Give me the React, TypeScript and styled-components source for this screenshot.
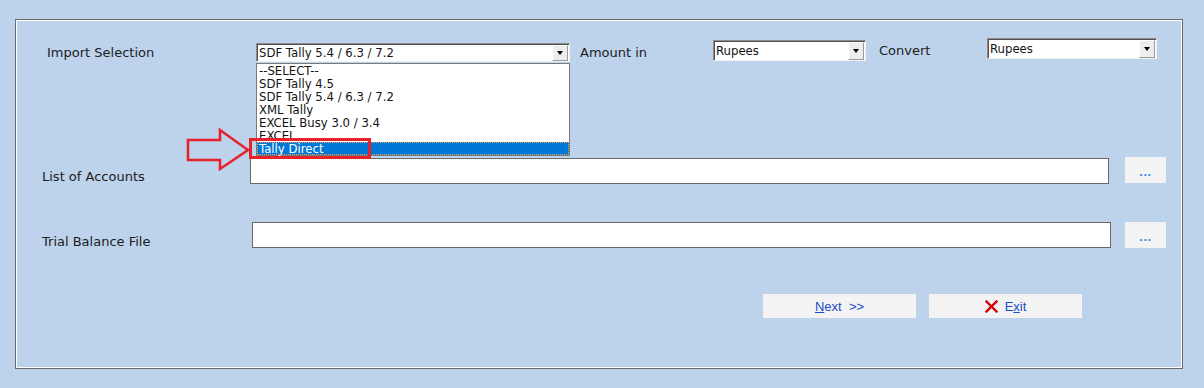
import React from "react";
import styled, { createGlobalStyle, css } from "styled-components";

// --- Estilos globais ---
const GlobalStyle = createGlobalStyle`
  html, body {
    margin: 0;
    padding: 0;
    background: #bdd3ec;
  }
  body {
    font-family: "DejaVu Sans", Verdana, sans-serif;
    color: #1c1c1c;
  }
`;

// --- Layout ---
const Page = styled.div`
  width: 1204px;
  height: 388px;
  box-sizing: border-box;
  padding: 19px 0 0 15px;
`;

const Panel = styled.div`
  position: relative;
  box-sizing: border-box;
  width: 1168px;
  height: 350px;
  border: 1px solid #6b6b6b;
  box-shadow: inset 0 0 0 1px #ffffff;
  padding-top: 18px;
`;

const TopRow = styled.div`
  display: flex;
  align-items: flex-start;
  padding-left: 31px;
`;

const FieldRow = styled.div<{ $mt: number }>`
  display: flex;
  align-items: flex-start;
  height: 26px;
  margin-top: ${(p) => p.$mt}px;
  padding: 0 16px 0 26px;
`;

const ActionRow = styled.div`
  display: flex;
  gap: 13px;
  margin-top: 46px;
  padding-left: 747px;
`;

const Label = styled.div<{ $w: number; $mt: number; $ml?: number }>`
  width: ${(p) => p.$w}px;
  flex: none;
  margin-top: ${(p) => p.$mt}px;
  margin-left: ${(p) => p.$ml ?? 0}px;
  font-size: 13px;
  line-height: 16px;
  white-space: nowrap;
`;

// --- Combo box estilo Windows ---
const SelectBox = styled.div<{ $w: number; $h: number; $mt: number }>`
  position: relative;
  flex: none;
  box-sizing: border-box;
  width: ${(p) => p.$w}px;
  height: ${(p) => p.$h}px;
  margin-top: ${(p) => p.$mt}px;
  background: #ffffff;
  border: 1px solid;
  border-color: #8c8c8c #f2f2f2 #f2f2f2 #8c8c8c;
  box-shadow: inset 1px 1px 0 #505050;
  display: flex;
  align-items: center;
`;

const SelectText = styled.span`
  flex: 1;
  padding: 1px 0 0 2px;
  font-size: 11.7px;
  color: #141414;
  white-space: nowrap;
`;

const ArrowBtn = styled.span`
  flex: none;
  width: 16px;
  align-self: stretch;
  margin: 1px 1px 0 0;
  box-sizing: border-box;
  background: #ededed;
  border: 1px solid;
  border-color: #ffffff #9a9a9a #9a9a9a #ffffff;
  display: flex;
  align-items: center;
  justify-content: center;

  &::after {
    content: "";
    border-left: 3.5px solid transparent;
    border-right: 3.5px solid transparent;
    border-top: 4px solid #000000;
  }
`;

const DropList = styled.ul`
  position: absolute;
  left: -1px;
  top: calc(100% + 2px);
  width: 314px;
  box-sizing: border-box;
  margin: 0;
  padding: 0;
  list-style: none;
  background: #ffffff;
  border: 1px solid #7a7a7a;
  z-index: 2;
`;

const DropItem = styled.li<{ $active?: boolean }>`
  height: 11px;
  line-height: 11px;
  padding: 2px 0 0 2px;
  font-size: 11.7px;
  color: #141414;
  white-space: nowrap;
  ${(p) =>
    p.$active &&
    css`
      background: #0078d7;
      color: #ffffff;
      outline: 1px dotted #f0a050;
      outline-offset: -1px;
    `}
`;

// --- Campos e botões ---
const TextField = styled.input<{ $mt: number }>`
  flex: none;
  box-sizing: border-box;
  width: 859px;
  height: 26px;
  margin: ${(p) => p.$mt}px 0 0 0;
  padding: 0 4px;
  background: #ffffff;
  border: 1px solid #686868;
  outline: none;
`;

const BrowseBtn = styled.button`
  flex: none;
  width: 41px;
  height: 26px;
  margin-left: auto;
  padding: 2px 0 0;
  border: none;
  background: #f3f3f3;
  color: #3a8ce4;
  font-family: "Liberation Sans", Arial, sans-serif;
  font-size: 13px;
  font-weight: bold;
  letter-spacing: 0.5px;
`;

const ActionBtn = styled.button`
  width: 153px;
  height: 24px;
  padding: 0;
  border: none;
  background: #f3f3f3;
  color: #1b4ccb;
  font-family: "Liberation Sans", Arial, sans-serif;
  font-size: 13px;
  white-space: pre;
  display: flex;
  align-items: center;
  justify-content: center;
  gap: 7px;
`;

// --- Anotações (sobrepostas) ---
const Highlight = styled.div`
  position: absolute;
  left: 233px;
  top: 118px;
  width: 122px;
  height: 21px;
  box-sizing: border-box;
  border: 3px solid #e8202a;
  z-index: 3;
`;

const ArrowMark = styled.svg`
  position: absolute;
  left: 170px;
  top: 108px;
  z-index: 3;
`;

const options = [
  "--SELECT--",
  "SDF Tally 4.5",
  "SDF Tally 5.4 / 6.3 / 7.2",
  "XML Tally",
  "EXCEL Busy 3.0 / 3.4",
  "EXCEL",
  "Tally Direct",
];

const ExitIcon = () => (
  <svg width="13" height="13" viewBox="0 0 13 13">
    <path d="M1.5 1.5 L11.5 11.5 M11.5 1.5 L1.5 11.5" stroke="#d90000" strokeWidth="2.4" strokeLinecap="square" />
  </svg>
);

const App = () => {
  return (
    <>
      <GlobalStyle />
      <Page>
        <Panel>
          <TopRow>
            <Label $w={209} $mt={7}>Import Selection</Label>
            <SelectBox $w={314} $h={19} $mt={5}>
              <SelectText>SDF Tally 5.4 / 6.3 / 7.2</SelectText>
              <ArrowBtn />
              <DropList>
                {options.map((o, i) => (
                  <DropItem key={o} $active={i === options.length - 1}>
                    {o}
                  </DropItem>
                ))}
              </DropList>
            </SelectBox>
            <Label $w={133} $mt={7} $ml={10}>Amount in</Label>
            <SelectBox $w={153} $h={21} $mt={2}>
              <SelectText>Rupees</SelectText>
              <ArrowBtn />
            </SelectBox>
            <Label $w={108} $mt={5} $ml={13}>Convert</Label>
            <SelectBox $w={170} $h={21} $mt={0}>
              <SelectText>Rupees</SelectText>
              <ArrowBtn />
            </SelectBox>
          </TopRow>

          <FieldRow $mt={95}>
            <Label $w={208} $mt={12}>List of Accounts</Label>
            <TextField $mt={1} readOnly />
            <BrowseBtn>...</BrowseBtn>
          </FieldRow>

          <FieldRow $mt={39}>
            <Label $w={210} $mt={12}>Trial Balance File</Label>
            <TextField $mt={0} readOnly />
            <BrowseBtn>...</BrowseBtn>
          </FieldRow>

          <ActionRow>
            <ActionBtn>
              <span><u>N</u>ext  {">>"}</span>
            </ActionBtn>
            <ActionBtn>
              <ExitIcon />
              <span>E<u>x</u>it</span>
            </ActionBtn>
          </ActionRow>

          <Highlight />
          <ArrowMark width="64" height="44" viewBox="0 0 64 44">
            <polygon
              points="2,12 34,12 34,2 62,22 34,41 34,32 2,32"
              fill="none"
              stroke="#e8202a"
              strokeWidth="2.5"
              strokeLinejoin="miter"
            />
          </ArrowMark>
        </Panel>
      </Page>
    </>
  );
};

export default App;
